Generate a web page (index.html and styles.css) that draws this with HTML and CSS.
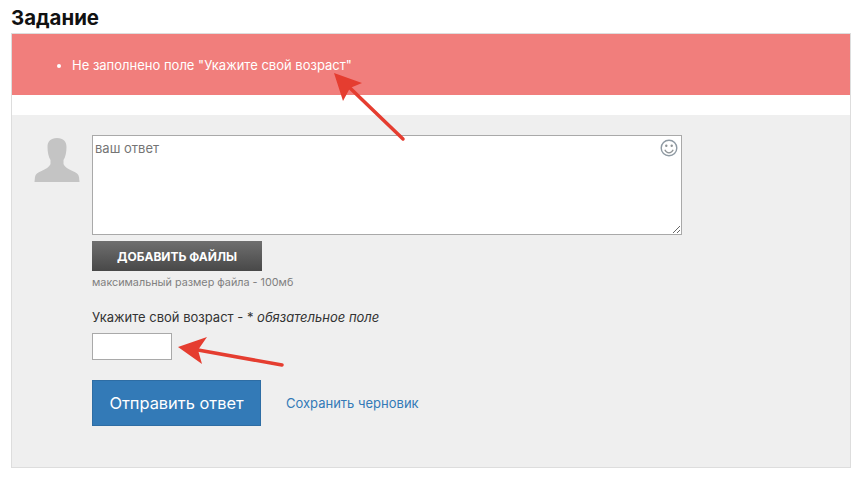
FILE: index.html
```html
<!DOCTYPE html>
<html lang="ru">
<head>
<meta charset="utf-8">
<title>Задание</title>
<link rel="stylesheet" href="styles.css">
</head>
<body>
<h1 class="title">Задание</h1>
<div class="panel">
  <div class="alert">
    <ul class="alert-list"><li>Не заполнено поле "Укажите свой возраст"</li></ul>
  </div>
  <div class="form">
    <svg class="avatar" viewBox="0 0 46 46" width="46" height="46" aria-hidden="true">
      <path fill="#c4c4c4" d="M23 0C16.500 0 13.500 3.500 13.500 9C13.500 14 14.500 19 16.500 22L16.500 26C15.500 29 11.500 31 7.500 33C3.500 34.500 1.500 36 1 39L.5 44H45.500L45 39C44.500 36 42.500 34.500 38.500 33C34.500 31 30.500 29 29.500 26L29.500 22C31.500 19 32.500 14 32.500 9C32.500 3.500 29.500 0 23 0Z"/>
    </svg>
    <div class="form-main">
      <div class="answer">
        <textarea class="answer-input" placeholder="ваш ответ"></textarea>
        <svg class="smile" viewBox="0 0 18 18" width="18" height="18" aria-hidden="true">
          <circle cx="9" cy="9" r="7.800" fill="none" stroke="#8f9aa3" stroke-width="1.400"/>
          <circle cx="6.300" cy="6.800" r="1.200" fill="#8f9496"/>
          <circle cx="11.700" cy="6.800" r="1.200" fill="#8f9496"/>
          <path d="M4.800 10.800c1 2 2.500 3 4.200 3s3.200-1 4.200-3" fill="none" stroke="#8f9496" stroke-width="1.300"/>
        </svg>
      </div>
      <button class="files-btn" type="button">ДОБАВИТЬ ФАЙЛЫ</button>
      <p class="hint">максимальный размер файла - 100мб</p>
      <label class="field-label" for="age">Укажите свой возраст - * <em>обязательное поле</em></label>
      <input class="age-input" id="age" type="text">
      <div class="actions">
        <button class="submit-btn" type="button">Отправить ответ</button>
        <a class="draft-link" href="#">Сохранить черновик</a>
      </div>
    </div>
  </div>
</div>
<svg class="arrows" viewBox="0 0 862 483" width="862" height="483" aria-hidden="true">
  <path d="M403 139 L350 88" stroke="#e53d30" stroke-width="3.500" stroke-linecap="round" fill="none"/>
  <path d="M334 73 L362 83 L350 88 L343 101 Z" fill="#e53d30"/>
  <path d="M282 365 L198 350" stroke="#e53d30" stroke-width="3.500" stroke-linecap="round" fill="none"/>
  <path d="M178 347 L207 337 L198 350 L202 364 Z" fill="#e53d30"/>
</svg>
</body>
</html>
```
FILE: styles.css
```css
* { box-sizing: border-box; }
html, body { margin: 0; padding: 0; }
body {
  width: 862px;
  height: 483px;
  overflow: hidden;
  position: relative;
  background: #fff;
  padding: 0 11px;
  font-family: Inter, Roboto, sans-serif;
  color: #222;
}
.title {
  margin: 0;
  height: 33px;
  font-size: 20.400px;
  line-height: 35px;
  font-weight: 700;
  color: #111;
}
.panel {
  width: 840px;
  height: 435px;
  border: 1px solid #ddd;
  background: #fff;
}
.alert {
  height: 61px;
  background: #f17e7c;
  color: #fff;
  font-size: 13px;
  display: flex;
  align-items: center;
}
.alert-list { margin: 0; padding: 0 0 0 60px; }
.form {
  margin-top: 20px;
  height: 352px;
  background: #efefef;
  display: flex;
  padding: 20px 0 0 22px;
}
.avatar { margin: 3px 12px 0 0; flex: none; }
.form-main { width: 590px; }
.answer { position: relative; height: 100px; }
.answer-input {
  display: block;
  width: 590px;
  height: 100px;
  border: 1px solid #a9a9a9;
  background: #fff;
  padding: 4px 2px;
  margin: 0;
  font-family: inherit;
  font-size: 13px;
  line-height: 16px;
  outline: none;
}
.answer-input::placeholder { color: #757575; opacity: 1; }
.smile { position: absolute; top: 4px; right: 4px; }
.files-btn {
  display: block;
  width: 170px;
  height: 30px;
  margin: 6px 0 0;
  padding: 0;
  border: 0;
  background: linear-gradient(#6f6f6f, #484848);
  color: #fff;
  font-family: inherit;
  font-size: 12px;
  font-weight: 700;
}
.hint {
  margin: 5px 0 0;
  font-size: 10.800px;
  line-height: 14px;
  color: #808080;
}
.field-label {
  display: block;
  margin-top: 18px;
  font-size: 13px;
  line-height: 18px;
  color: #333;
}
.age-input {
  display: block;
  width: 80px;
  height: 27px;
  margin: 7px 0 0;
  padding: 0 4px;
  border: 1px solid #a9a9a9;
  background: #fff;
  outline: none;
}
.actions {
  display: flex;
  align-items: center;
  margin-top: 20px;
}
.submit-btn {
  width: 169px;
  height: 46px;
  padding: 0;
  border: 1px solid #2e6da4;
  background: #337ab7;
  color: #fff;
  font-family: inherit;
  font-size: 16.400px;
}
.draft-link {
  margin-left: 25px;
  font-size: 13px;
  color: #337ab7;
  text-decoration: none;
}
.arrows { position: absolute; left: 0; top: 0; pointer-events: none; }
```
